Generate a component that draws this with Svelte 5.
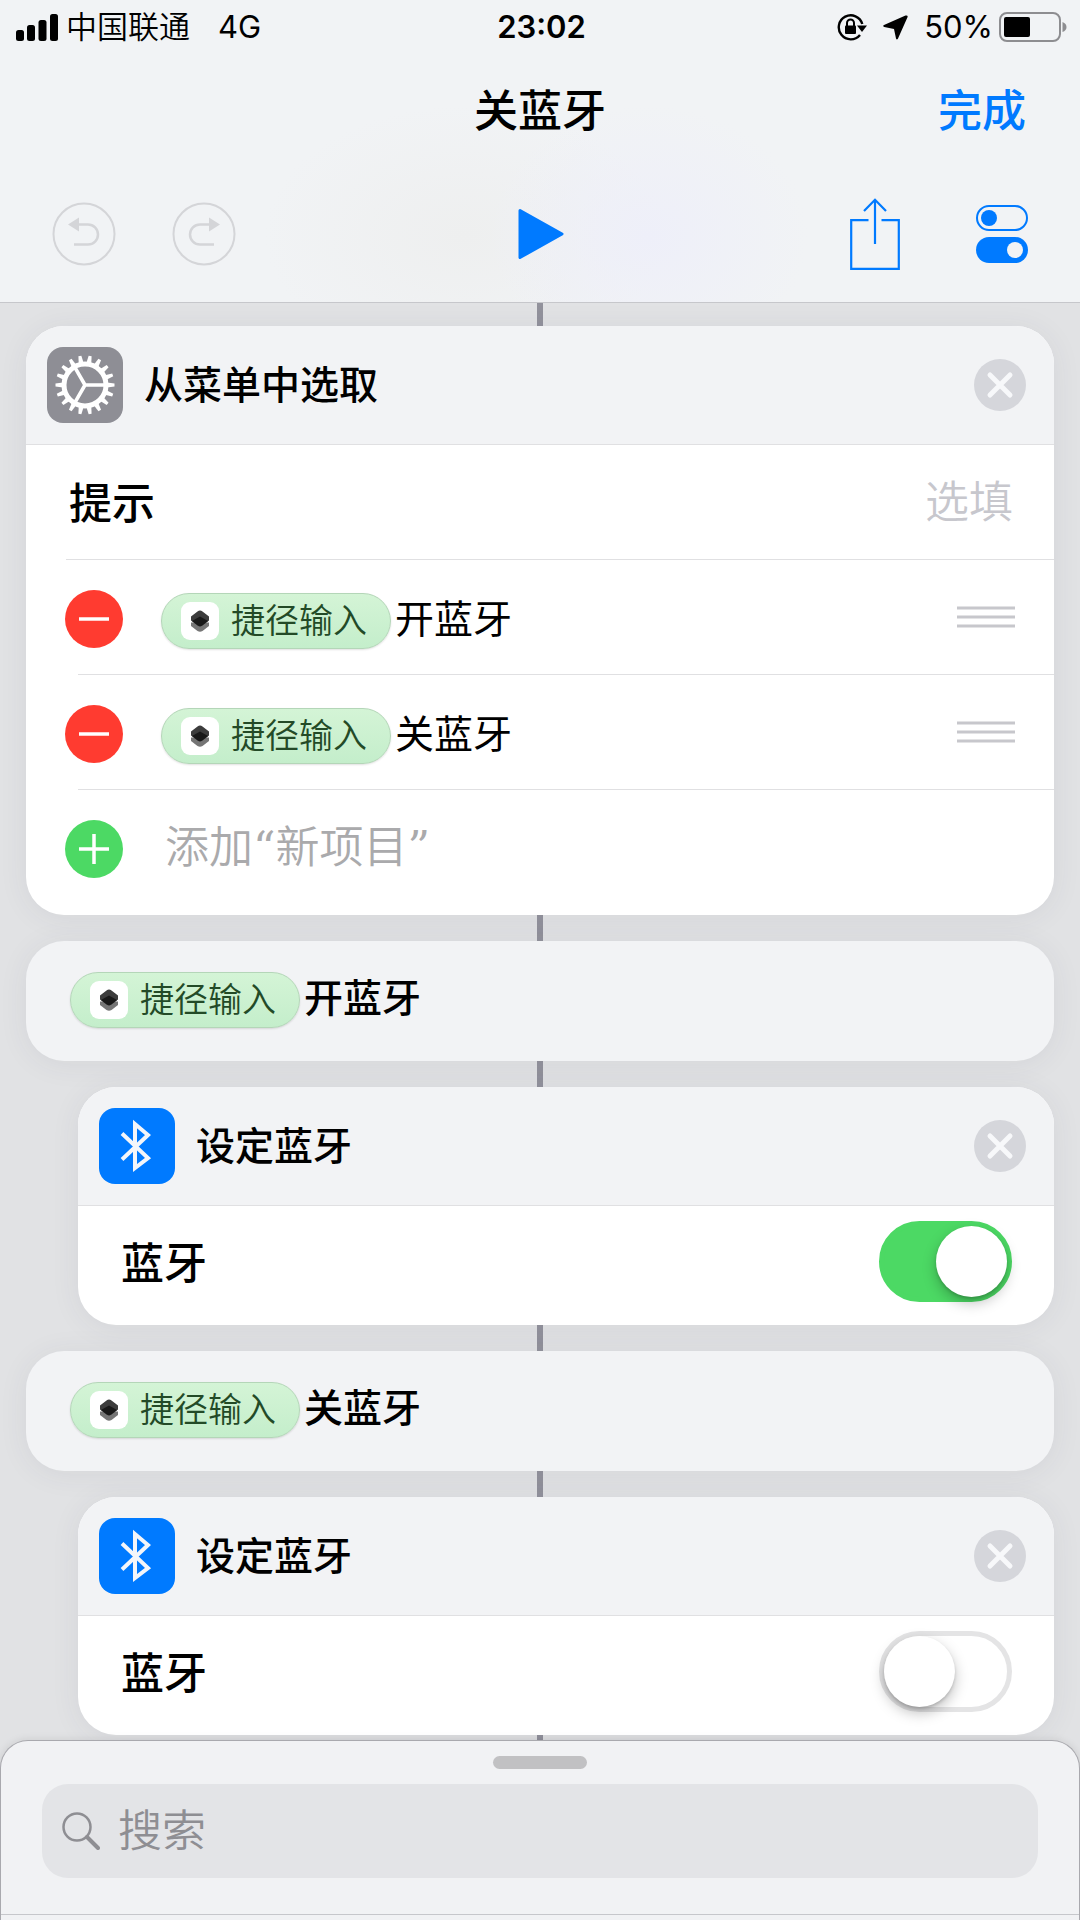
<script lang="ts">
  type MenuItem = { id: number; text: string };

  const token = '捷径输入';

  let title = $state('关蓝牙');
  let prompt = $state('');
  let newItem = $state('');
  let search = $state('');
  let items: MenuItem[] = $state([
    { id: 1, text: '开蓝牙' },
    { id: 2, text: '关蓝牙' },
  ]);
  let branches = $state([
    { id: 1, label: '开蓝牙', on: true },
    { id: 2, label: '关蓝牙', on: false },
  ]);

  // gear teeth, one every 20 degrees
  const teeth = Array.from({ length: 18 }, (_, i) => i * 20 + 10);

  function removeItem(id: number) {
    items = items.filter((item) => item.id !== id);
  }

  function removeBranch(id: number) {
    branches = branches.filter((b) => b.id !== id);
  }

  function addItem() {
    if (!newItem.trim()) return;
    items = [...items, { id: Date.now(), text: newItem.trim() }];
    newItem = '';
  }
</script>

{#snippet pill()}
  <span class="pill">
    <span class="pill-icon">
      <svg viewBox="0 0 38 38" width="38" height="38" aria-hidden="true">
        <path d="M10 20.500h18v3.500l-6.500 5q-2.500 1.500-5 0L10 24z" fill="#757575" />
        <path d="M10 14.500l6.500-5q2.500-2 5 0l6.500 5v4l-6.500 5q-2.500 1.800-5 0l-6.500-5z" fill="#3c3c3c" />
        <path d="M11 19l8-4.500 8 4.500-5.500 4.300q-2.500 1.700-5 0z" fill="#181818" />
      </svg>
    </span>
    {token}
  </span>
{/snippet}

{#snippet closeButton(label: string, action: () => void)}
  <button class="close" aria-label={label} onclick={action}>
    <svg viewBox="0 0 52 52" width="52" height="52" aria-hidden="true">
      <circle cx="26" cy="26" r="26" fill="#d5d6db" />
      <path d="M16 16l20 20M36 16l-20 20" stroke="#f7f8fa" stroke-width="5" stroke-linecap="round" />
    </svg>
  </button>
{/snippet}

<div class="screen">
  <header class="nav">
    <div class="status">
      <div class="status-left">
        <svg viewBox="0 0 42 27" width="42" height="27" aria-hidden="true">
          <rect x="0" y="16" width="8" height="11" rx="2.500" />
          <rect x="11" y="11" width="8" height="16" rx="2.500" />
          <rect x="22.500" y="6" width="8" height="21" rx="2.500" />
          <rect x="34" y="0" width="8" height="27" rx="2.500" />
        </svg>
        <span class="carrier">中国联通</span>
        <span class="network">4G</span>
      </div>
      <time class="clock">23:02</time>
      <div class="status-right">
        <svg viewBox="0 0 30 28" width="30" height="28" aria-hidden="true">
          <path d="M25.300 11A12 12 0 1 0 23 22" fill="none" stroke="#000" stroke-width="2.400" />
          <path d="M20 12.500h10l-5 6.500z" />
          <rect x="8" y="12.500" width="11" height="8.500" rx="1" />
          <path d="M10 13v-3a3.500 3.500 0 0 1 7 0v3" fill="none" stroke="#000" stroke-width="2" />
        </svg>
        <svg viewBox="0 0 25 25" width="25" height="25" aria-hidden="true">
          <path d="M22.500 .600L1 10q-1.800 1.300 .300 1.900l9.700 2 2 9.700q.800 1.900 1.900.200L24.600 2q.400-2-2.100-1.400z" />
        </svg>
        <span class="percent">50%</span>
        <svg viewBox="0 0 68 30" width="68" height="30" aria-hidden="true">
          <rect x="1" y="1" width="60" height="28" rx="7" fill="none" stroke="#8d8d90" stroke-width="2" />
          <rect x="5" y="5" width="26" height="20" rx="2" />
          <path d="M63.500 10q4 1.500 4 5t-4 5z" fill="#8d8d90" />
        </svg>
      </div>
    </div>

    <div class="title-row">
      <h1>{title}</h1>
      <button class="done">完成</button>
    </div>

    <div class="toolbar">
      <div class="tools">
        <button aria-label="撤销" disabled>
          <svg viewBox="0 0 64 64" width="64" height="64" fill="none" stroke="#d4d5d8" stroke-width="2" aria-hidden="true">
            <circle cx="32" cy="32" r="30.500" />
            <path d="M26 22.500h10a10 10 0 0 1 0 20H22" stroke-width="2.500" />
            <path d="M16 22.500l11-7v14z" fill="#d4d5d8" stroke="none" />
          </svg>
        </button>
        <button aria-label="重做" disabled>
          <svg viewBox="0 0 64 64" width="64" height="64" fill="none" stroke="#d4d5d8" stroke-width="2" aria-hidden="true">
            <circle cx="32" cy="32" r="30.500" />
            <path d="M38 22.500H28a10 10 0 0 0 0 20h14" stroke-width="2.500" />
            <path d="M48 22.500l-11-7v14z" fill="#d4d5d8" stroke="none" />
          </svg>
        </button>
      </div>
      <button aria-label="运行">
        <svg viewBox="0 0 46 52" width="46" height="52" aria-hidden="true">
          <path d="M2 2.500L44 26 2 49.500z" fill="#007aff" stroke="#007aff" stroke-width="3" stroke-linejoin="round" />
        </svg>
      </button>
      <div class="tools right">
        <button aria-label="共享">
          <svg viewBox="0 0 52 72" width="52" height="72" fill="none" stroke="#007aff" stroke-width="2.200" aria-hidden="true">
            <path d="M19.500 22.200H2.200v48.600h47.600V22.200H32.500M26 46V2M15 13L26 1.800 37 13" />
          </svg>
        </button>
        <button aria-label="设置">
          <svg viewBox="0 0 54 60" width="54" height="60" aria-hidden="true">
            <rect x="2" y="2" width="50" height="24" rx="12" fill="none" stroke="#007aff" stroke-width="2" />
            <circle cx="14" cy="14" r="8" fill="#007aff" />
            <rect x="1" y="33" width="52" height="26" rx="13" fill="#007aff" />
            <circle cx="40" cy="46" r="8" fill="#f1f3f5" />
          </svg>
        </button>
      </div>
    </div>
  </header>

  <main class="flow">
    <section class="card">
      <div class="card-head">
        <svg class="tile" viewBox="0 0 76 76" width="76" height="76" aria-hidden="true">
          <rect width="76" height="76" rx="16" fill="#8e8e95" />
          {#each teeth as angle}
            <path d="M35.500 16l1-7.500h3l1 7.500z" fill="#fff" transform="rotate({angle} 38 38)" />
          {/each}
          <circle cx="38" cy="38" r="21" fill="none" stroke="#fff" stroke-width="5" />
          <path d="M38 38h20M38 38L28 20.700M38 38L28 55.300" stroke="#fff" stroke-width="3.600" />
        </svg>
        <h2>从菜单中选取</h2>
        {@render closeButton('移除从菜单中选取', () => (items = []))}
      </div>

      <div class="field">
        <label for="prompt">提示</label>
        <input id="prompt" type="text" placeholder="选填" bind:value={prompt} />
      </div>

      <ul class="items">
        {#each items as item (item.id)}
          <li class="item">
            <button class="round" aria-label="删除{item.text}" onclick={() => removeItem(item.id)}>
              <svg viewBox="0 0 58 58" width="58" height="58" aria-hidden="true">
                <circle cx="29" cy="29" r="29" fill="#ff3b30" />
                <path d="M14 29h30" stroke="#fff" stroke-width="3.500" />
              </svg>
            </button>
            <div class="phrase">{@render pill()}{item.text}</div>
            <svg viewBox="0 0 58 22" width="58" height="22" aria-hidden="true">
              <path d="M0 2h58M0 11h58M0 20h58" stroke="#c7c7cc" stroke-width="3" />
            </svg>
          </li>
        {/each}
        <li class="item">
          <button class="round" aria-label="添加" onclick={addItem}>
            <svg viewBox="0 0 58 58" width="58" height="58" aria-hidden="true">
              <circle cx="29" cy="29" r="29" fill="#4cd964" />
              <path d="M14 29h30M29 14v30" stroke="#fff" stroke-width="3.500" />
            </svg>
          </button>
          <input
            class="new-item"
            type="text"
            placeholder="添加“新项目”"
            aria-label="新项目"
            bind:value={newItem}
          />
        </li>
      </ul>
    </section>

    {#each branches as branch (branch.id)}
      <section class="card case">
        <div class="phrase">{@render pill()}{branch.label}</div>
      </section>

      <section class="card nested">
        <div class="card-head">
          <svg class="tile" viewBox="0 0 76 76" width="76" height="76" aria-hidden="true">
            <rect width="76" height="76" rx="16" fill="#007aff" />
            <path d="M23 25.500L49 50 36 60V16L49 27 23 51.500" fill="none" stroke="#f4f6fa" stroke-width="4" />
          </svg>
          <h2>设定蓝牙</h2>
          {@render closeButton('移除设定蓝牙', () => removeBranch(branch.id))}
        </div>
        <div class="setting">
          <label for="bt-{branch.id}">蓝牙</label>
          <input id="bt-{branch.id}" class="switch" type="checkbox" role="switch" bind:checked={branch.on} />
        </div>
      </section>
    {/each}
  </main>

  <footer class="sheet">
    <span class="handle"></span>
    <div class="search">
      <svg viewBox="0 0 38 38" width="38" height="38" fill="none" stroke="#8e8e93" aria-hidden="true">
        <circle cx="15" cy="15" r="13.500" stroke-width="2.500" />
        <path d="M25 25l11 11" stroke-width="4" stroke-linecap="round" />
      </svg>
      <input type="search" placeholder="搜索" aria-label="搜索" bind:value={search} />
    </div>
  </footer>
</div>

<style>
  :global(body) {
    background: #e1e2e4;
  }

  .screen {
    display: flex;
    flex-direction: column;
    height: 100vh;
    overflow: hidden;
    color: #000;
    font-family: Inter, 'Noto Sans CJK SC', sans-serif;
    font-size: 39px;
  }

  h1,
  h2,
  ul {
    margin: 0;
    padding: 0;
    font-weight: 500;
    list-style: none;
  }

  button {
    display: block;
    flex-shrink: 0;
    padding: 0;
    border: none;
    background: none;
    font: inherit;
    cursor: pointer;
  }

  input {
    min-width: 0;
    padding: 0;
    border: none;
    outline: none;
    background: none;
    font: inherit;
    font-size: 44px;
    font-weight: 350;
  }

  svg {
    display: block;
    flex-shrink: 0;
  }

  .nav {
    flex-shrink: 0;
    background:
      radial-gradient(160px 130px at 60% 78%, #eeeff9, transparent),
      radial-gradient(200px 130px at 43% 78%, #eeefef, transparent),
      #f1f3f5;
    border-bottom: 1px solid #c6c7cb;
  }

  .status {
    display: grid;
    grid-template-columns: 1fr auto 1fr;
    align-items: center;
    height: 54px;
    padding: 0 13px 0 16px;
    font-size: 31px;
    line-height: 40px;
  }

  .status-left,
  .status-right {
    display: flex;
    align-items: center;
  }

  .status-left {
    gap: 8px;
  }

  .carrier {
    font-weight: 350;
  }

  .network {
    margin-left: 20px;
  }

  .clock {
    font-weight: 600;
  }

  .status-right {
    justify-content: flex-end;
    gap: 16px;
  }

  .percent {
    margin-right: -10px;
  }

  .title-row {
    display: grid;
    grid-template-columns: 1fr auto 1fr;
    align-items: center;
    height: 108px;
    padding: 0 54px;
  }

  .title-row h1 {
    grid-column: 2;
    font-size: 44px;
  }

  .done {
    justify-self: end;
    color: #007aff;
    font-size: 44px;
    font-weight: 500;
  }

  .toolbar {
    display: grid;
    grid-template-columns: 1fr auto 1fr;
    align-items: center;
    height: 136px;
    padding: 4px 51px 0 52px;
  }

  .tools {
    display: flex;
    align-items: center;
    gap: 56px;
  }

  .tools.right {
    justify-content: flex-end;
    gap: 74px;
  }

  .flow {
    flex: 1;
    min-height: 0;
    display: flex;
    flex-direction: column;
    gap: 26px;
    padding: 23px 26px 0;
    background: linear-gradient(#92929c, #92929c) center / 6px 100% no-repeat;
  }

  .card {
    flex-shrink: 0;
    overflow: hidden;
    background: #fff;
    border-radius: 38px;
    box-shadow: 0 3px 30px rgba(60, 60, 80, 0.07);
  }

  .nested {
    margin-left: 52px;
  }

  .case {
    display: flex;
    align-items: center;
    height: 114px;
    padding: 0 44px 6px;
    background: #f2f3f5;
    font-weight: 500;
  }

  .card-head {
    display: flex;
    align-items: center;
    gap: 21px;
    padding: 21px 28px 21px 21px;
    background: #f2f3f5;
    border-bottom: 1px solid #e0e0e2;
  }

  .card-head h2 {
    flex: 1;
    font-size: 39px;
    line-height: 50px;
  }

  .field {
    display: flex;
    align-items: center;
    height: 114px;
    padding-right: 41px;
    margin-left: 40px;
    border-bottom: 1px solid #e0e0e2;
  }

  label {
    padding: 0 0 4px 3px;
    font-size: 43px;
    font-weight: 500;
  }

  .field input {
    flex: 1;
    text-align: right;
  }

  ::placeholder {
    color: #c7c7cd;
    opacity: 1;
  }

  .items {
    padding-bottom: 11px;
  }

  .item {
    display: flex;
    align-items: center;
    height: 114px;
    padding-right: 39px;
    margin-left: 52px;
    border-bottom: 1px solid #e0e0e2;
  }

  .item:last-child {
    border-bottom: none;
  }

  .round {
    margin: 4px 38px 0 -13px;
  }

  .phrase {
    flex: 1;
    display: flex;
    align-items: center;
    gap: 4px;
    line-height: 56px;
  }

  .item .phrase {
    padding-top: 4px;
    font-weight: 400;
  }

  .new-item {
    flex: 1;
    padding-left: 4px;
    font-family: 'DejaVu Serif', 'Noto Sans CJK SC', sans-serif;
  }

  .new-item::placeholder {
    color: #aaaaac;
  }

  .pill {
    display: flex;
    align-items: center;
    gap: 12px;
    height: 54px;
    padding: 0 23px 0 19px;
    margin-top: 4px;
    border: 1px solid #b4d6b8;
    border-radius: 28px;
    background: linear-gradient(#d4f4d6, #c4eecb);
    box-shadow: 0 1px 2px rgba(0, 0, 0, 0.12);
    color: #234a27;
    font-size: 34px;
    font-weight: 350;
  }

  .pill-icon {
    border-radius: 9px;
    background: #fff;
  }

  .setting {
    display: flex;
    align-items: center;
    justify-content: space-between;
    padding: 15px 42px 23px 40px;
  }

  .switch {
    appearance: none;
    width: 133px;
    height: 81px;
    margin: 0;
    border: 5px solid #e4e4e5;
    border-radius: 41px;
    background: #fff;
    cursor: pointer;
  }

  .switch::before {
    content: '';
    display: block;
    width: 71px;
    height: 71px;
    border-radius: 50%;
    background: #fff;
    box-shadow: 0 6px 14px rgba(0, 0, 0, 0.25), 0 2px 3px rgba(0, 0, 0, 0.15);
  }

  .switch:checked {
    border-color: #4cd964;
    background: #4cd964;
  }

  .switch:checked::before {
    margin-left: auto;
  }

  .sheet {
    flex-shrink: 0;
    display: flex;
    flex-direction: column;
    align-items: center;
    gap: 15px;
    z-index: 1;
    padding: 15px 41px 0;
    background: #f1f2f4;
    border: 1px solid #a9a9ae;
    border-bottom: none;
    border-radius: 28px 28px 0 0;
    box-shadow: 0 0 8px rgba(0, 0, 0, 0.1);
  }

  .handle {
    width: 94px;
    height: 13px;
    border-radius: 7px;
    background: #c1c1c3;
  }

  .search {
    align-self: stretch;
    display: flex;
    align-items: center;
    gap: 18px;
    height: 94px;
    padding: 0 20px;
    border-radius: 26px;
    background: #e3e4e7;
  }

  .search input {
    flex: 1;
    appearance: none;
  }

  .search input::placeholder {
    color: #8e8e93;
  }

  .sheet::after {
    content: '';
    height: 5px;
    margin: 21px -41px 0;
    align-self: stretch;
    border-top: 1px solid #c6c7cb;
  }
</style>
